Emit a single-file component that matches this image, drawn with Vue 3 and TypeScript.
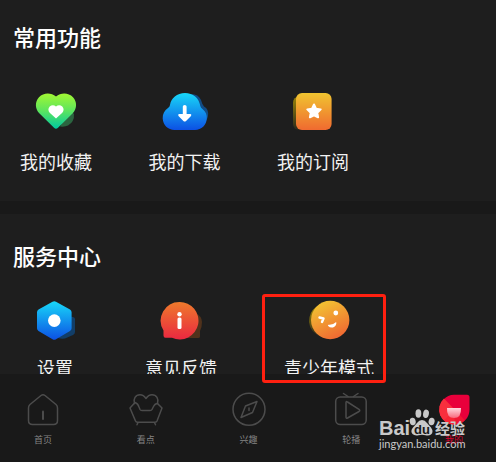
<script setup lang="ts">
interface Item {
  id: string
  label: string
}

const common: Item[] = [
  { id: 'favorite', label: '我的收藏' },
  { id: 'download', label: '我的下载' },
  { id: 'subscribe', label: '我的订阅' },
]

const service: Item[] = [
  { id: 'settings', label: '设置' },
  { id: 'feedback', label: '意见反馈' },
  { id: 'teen', label: '青少年模式' },
]

const tabs: Item[] = [
  { id: 'home', label: '首页' },
  { id: 'watch', label: '看点' },
  { id: 'interest', label: '兴趣' },
  { id: 'live', label: '轮播' },
  { id: 'mine', label: '我的' },
]
</script>

<template>
  <div class="page">
    <svg class="defs" aria-hidden="true">
      <defs>
        <linearGradient id="g-green" x1="0" y1="0" x2="0" y2="1">
          <stop offset="0" stop-color="#a2f833" /><stop offset=".5" stop-color="#5be45f" /><stop offset="1" stop-color="#00c8a0" />
        </linearGradient>
        <linearGradient id="g-blue" x1="0" y1="0" x2="0" y2="1">
          <stop offset="0" stop-color="#18d8f8" /><stop offset="1" stop-color="#0c50e4" />
        </linearGradient>
        <linearGradient id="g-orange" x1="0" y1="0" x2="0" y2="1">
          <stop offset="0" stop-color="#f0c430" /><stop offset="1" stop-color="#f06a30" />
        </linearGradient>
        <linearGradient id="g-face" x1=".2" y1="0" x2=".7" y2="1">
          <stop offset="0" stop-color="#f2c832" /><stop offset="1" stop-color="#f06632" />
        </linearGradient>
        <linearGradient id="g-red" x1="0" y1="0" x2="0" y2="1">
          <stop offset="0" stop-color="#ee7a2c" /><stop offset="1" stop-color="#ea2840" />
        </linearGradient>
        <linearGradient id="g-olive" x1="0" y1="0" x2="0" y2="1">
          <stop offset="0" stop-color="#9a8408" /><stop offset="1" stop-color="#2c2a1c" />
        </linearGradient>
        <linearGradient id="g-cup" x1="0" y1="0" x2="0" y2="1">
          <stop offset="0" stop-color="#ffd8de" /><stop offset="1" stop-color="#f8687c" />
        </linearGradient>
      </defs>
    </svg>

    <section class="panel panel-common">
      <h2>常用功能</h2>
      <div class="grid grid-common">
        <button v-for="item in common" :key="item.id" type="button" class="entry">
          <svg v-if="item.id === 'favorite'" class="icon" viewBox="0 0 48 44" aria-hidden="true">
            <path fill="#2b6540" d="M38 21L42 25Q42.500 33 36 36.500Q33 38 28 37.500Z" />
            <path fill="url(#g-green)" d="M24 7.500C19 3.200 11.500 3.400 7 8.200C2.800 12.800 3 19.500 7 24L22 38.800Q24 40.500 26 38.800L41 24C45 19.500 45.200 12.800 41 8.200C36.500 3.400 29 3.200 24 7.500Z" />
            <path fill="#fff" d="M24 17.500C22 15.700 19.500 15.800 17.700 17.600C16 19.300 16 22 17.700 23.700L24 29.500L30.300 23.700C32 22 32 19.300 30.300 17.600C28.500 15.800 26 15.700 24 17.500Z" />
          </svg>
          <svg v-else-if="item.id === 'download'" class="icon" viewBox="0 0 48 44" aria-hidden="true">
            <path fill="#124c86" d="M28 5Q37 4 40 11Q41 15 43 17.500Q48 20 47 27Q46 32 43 33Z" />
            <path fill="url(#g-blue)" d="M24 4C32 4 38 9 39.300 17Q39.800 18.800 41.500 20C45 23 46 26 45.800 29.500C45.500 36 40.500 41 34 41H13.500C7 41 2 36 1.700 29.500C1.500 25 3.500 21.500 7 19Q8.700 18 9 16C10 9 16 4 24 4Z" />
            <path fill="#fff" d="M21.800 17.500Q21.800 16 23.700 16T25.600 17.500V25H29.500Q31 25.500 30 27L25 32Q23.700 33.200 22.400 32L17.500 27Q16.500 25.500 18 25H21.800Z" />
          </svg>
          <svg v-else class="icon" viewBox="0 0 48 44" aria-hidden="true">
            <rect x="4" y="7.500" width="24" height="33.500" rx="6" fill="url(#g-olive)" />
            <rect x="7" y="4" width="35.600" height="37" rx="6" fill="url(#g-orange)" />
            <path fill="#fff" stroke="#fff" stroke-width="2" stroke-linejoin="round" d="M25 15.500L27 19.700L31.700 20.400L28.300 23.700L29.100 28.300L25 26.300L20.900 28.300L21.700 23.700L18.300 20.400L23 19.700Z" />
          </svg>
          <span>{{ item.label }}</span>
        </button>
      </div>
    </section>

    <section class="panel panel-service">
      <h2>服务中心</h2>
      <div class="grid grid-service">
        <button v-for="item in service" :key="item.id" type="button" class="entry">
          <svg v-if="item.id === 'settings'" class="icon" viewBox="0 0 48 44" aria-hidden="true">
            <path fill="#123e68" d="M36 19L42 20Q44 20.500 44 22V35Q44 37 42 38L34 41.500Q30 42 27 41Z" />
            <path fill="url(#g-blue)" d="M21.500 4.700Q23.300 3.700 25 4.700L39 12.500Q40.600 13.500 40.600 15.300V31.300Q40.600 33 39 34L25 42.200Q23.300 43.200 21.500 42.200L7.500 34Q6 33 6 31.300V15.300Q6 13.500 7.500 12.500Z" />
            <circle cx="23.300" cy="23.600" r="6.300" fill="#fff" />
          </svg>
          <svg v-else-if="item.id === 'feedback'" class="icon" viewBox="0 0 48 44" aria-hidden="true">
            <path fill="#50321c" d="M37 15Q45 19 45 25Q45 30 43 34V39.500Q43 41 41 41H25Z" />
            <path fill="url(#g-red)" d="M22.500 5A18.700 18.700 0 1 1 15 40.700H8.500Q6.500 40.700 6.500 38.500V33.500A18.700 18.700 0 0 1 22.500 5Z" />
            <circle cx="22.500" cy="17.300" r="2.200" fill="#fff" />
            <rect x="20.500" y="20.500" width="4" height="11.500" rx="1.500" fill="#fff" />
          </svg>
          <svg v-else class="icon" viewBox="0 0 48 44" aria-hidden="true">
            <path fill="url(#g-olive)" d="M11 10Q4 15 4 25Q5 36 17 40L25 35V10Z" />
            <circle cx="25.200" cy="23" r="19.200" fill="url(#g-face)" />
            <circle cx="30.800" cy="16" r="2.400" fill="#fff" />
            <path fill="none" stroke="#fff" stroke-width="2.400" stroke-linecap="round" stroke-linejoin="round" d="M14.500 20.500L18.500 21.500L17 25" />
            <path fill="#fff" d="M31.200 25Q32 28.500 28 30.500Q25 31 23.200 29Q22.300 27.600 24 27.700Q28 28 31.200 25Z" />
          </svg>
          <span>{{ item.label }}</span>
        </button>
      </div>
    </section>

    <nav class="tabbar">
      <a v-for="tab in tabs" :key="tab.id" href="#" class="tab" :class="{ active: tab.id === 'mine' }">
        <svg class="tab-icon" viewBox="0 0 36 36" aria-hidden="true">
          <g v-if="tab.id === 'home'">
            <path d="M16 4.500Q18 3 20 4.500L31 13.500Q32.500 14.800 32.500 17V29.500Q32.500 33.500 28.500 33.500H7.500Q3.500 33.500 3.500 29.500V17Q3.500 14.800 5 13.500Z" />
            <path stroke-width="2" d="M18 20.500V28" />
          </g>
          <g v-else-if="tab.id === 'watch'">
            <path d="M6.500 12.500C5 8 7.500 3.800 12 3.800Q15.500 3.800 18 7.500Q20.500 3.800 24 3.800C28.500 3.800 31 8 29.500 12.500" />
            <path d="M7 11.500Q10 12.500 11 16L12 18.500Q12.500 19.500 14 19.500H22Q23.500 19.500 24 18.500L25.500 15.500Q27 12.500 29.500 12.500L34 17L29 30Q28.500 31.200 27 31.200H9.500Q8 31.200 7.500 30L2 17ZM10 31.500L9 33.700M26.500 31.500L27.500 33.700" />
          </g>
          <g v-else-if="tab.id === 'interest'">
            <circle cx="18" cy="18.300" r="16" />
            <path d="M26 10.500L21.500 21.500L10 26.500L14.500 15ZM18 17V19.500" />
          </g>
          <g v-else-if="tab.id === 'live'">
            <rect x="2.700" y="6" width="30.500" height="27.500" rx="4.500" />
            <path d="M10.500 2.500L15 5.500M25 2.500L20.500 5.500M13 11.500V26Q13 27.800 14.500 27L26 20.500Q27.500 19.500 26 18.300L14.500 11Q13 10 13 11.500Z" />
          </g>
          <g v-else class="drop">
            <path fill="#e9003b" d="M18 3.700H31Q33.500 3.700 33.500 6.200V18.500A15 15 0 1 1 18 3.700Z" />
            <path fill="#f82f3d" d="M8 7.500L18.500 18.500V33.600A15 15 0 0 1 8 7.500Z" />
            <path fill="#f6202f" opacity=".65" d="M18.500 18.500L29 29.500A15 15 0 0 1 8 29.500Z" />
            <path fill="url(#g-cup)" d="M11 17H25Q25.500 27 18 27T11 17Z" />
          </g>
        </svg>
        <span>{{ tab.label }}</span>
      </a>
    </nav>

    <div class="highlight"></div>

    <div class="watermark">
      <div class="brand">
        <span class="bai">Bai</span>
        <svg class="paw" viewBox="0 0 26 28" aria-hidden="true">
          <g fill="#c9c9c9">
            <ellipse cx="3.700" cy="13.500" rx="3" ry="3.800" transform="rotate(-12 3.700 13.500)" />
            <ellipse cx="9.400" cy="5.500" rx="2.900" ry="4.200" />
            <ellipse cx="17" cy="5.800" rx="2.900" ry="4.200" transform="rotate(10 17 5.800)" />
            <ellipse cx="22.600" cy="13.500" rx="3" ry="3.800" transform="rotate(12 22.600 13.500)" />
            <path d="M13 12Q16 12 18 15L22 19.500Q25 24 22 26.500Q20 28 16.500 27.200Q13 26.500 9.500 27.200Q5.500 28 3.500 26Q1 23 4 19.500L8 15Q10 12 13 12Z" />
          </g>
          <text x="13" y="25.500" text-anchor="middle" class="du">du</text>
        </svg>
        <span class="exp">经验</span>
      </div>
      <div class="url">jingyan.baidu.com</div>
    </div>
  </div>
</template>

<style>
body {
  margin: 0;
  background: #191919;
}
</style>

<style scoped>
.page {
  position: relative;
  display: flex;
  flex-direction: column;
  min-height: 100vh;
  overflow: hidden;
  background: #191919;
  color: #fff;
  font-family: "Noto Sans CJK SC", "Noto Sans", sans-serif;
}

.defs {
  position: absolute;
  width: 0;
  height: 0;
}

.panel {
  background: #1e1e1e;
}

.panel-common {
  padding: 21px 0 28px;
  margin-bottom: 13px;
}

.panel-service {
  height: 134px;
  padding-top: 26px;
  overflow: hidden;
}

h2 {
  margin: 0;
  padding-left: 13px;
  font-size: 22px;
  line-height: 30px;
  font-weight: 500;
}

.grid {
  display: grid;
}

.grid-common {
  grid-template-columns: 112fr 145fr 112fr 127fr;
  margin-top: 38px;
}

.grid-service {
  grid-template-columns: 110fr 142fr 154fr 90fr;
  margin-top: 27px;
}

.entry {
  display: flex;
  flex-direction: column;
  align-items: center;
  gap: 16px;
  padding: 0;
  border: 0;
  background: none;
  color: #f2f2f2;
  font-family: inherit;
  font-size: 18px;
  line-height: 24px;
  white-space: nowrap;
}

.grid-service .entry {
  gap: 14px;
}

.icon {
  width: 48px;
  height: 44px;
}

.tabbar {
  display: flex;
  flex: 1;
  justify-content: space-between;
  padding: 17px 12px 14px 13px;
  background: #191919;
}

.tab {
  display: flex;
  flex-direction: column;
  align-items: center;
  gap: 6px;
  width: 60px;
  color: #858585;
  font-size: 9px;
  line-height: 14px;
  text-decoration: none;
}

.tab.active {
  color: #d8002c;
}

.tab-icon {
  width: 36px;
  height: 36px;
  fill: none;
  stroke: #4c4c4c;
  stroke-width: 1.5;
  stroke-linecap: round;
  stroke-linejoin: round;
}

.drop {
  stroke: none;
}

.highlight {
  position: absolute;
  left: 262px;
  top: 294px;
  width: 118px;
  height: 83px;
  border: 3px solid #ff2010;
  border-radius: 3px;
}

.watermark {
  position: absolute;
  left: 379px;
  top: 408px;
  color: #c9c9c9;
}

.brand {
  display: flex;
  align-items: flex-end;
  height: 28px;
}

.bai {
  width: 30px;
  font-family: "Liberation Sans", sans-serif;
  font-size: 20px;
  line-height: 16px;
  font-weight: 700;
}

.paw {
  width: 26px;
  height: 28px;
}

.du {
  fill: #191919;
  font-family: "Liberation Sans", sans-serif;
  font-size: 13px;
  font-weight: 700;
}

.exp {
  font-size: 15px;
  line-height: 16px;
  font-weight: 700;
}

.url {
  font-family: Lato, "Noto Sans", sans-serif;
  font-size: 11px;
  line-height: 16px;
}
</style>
